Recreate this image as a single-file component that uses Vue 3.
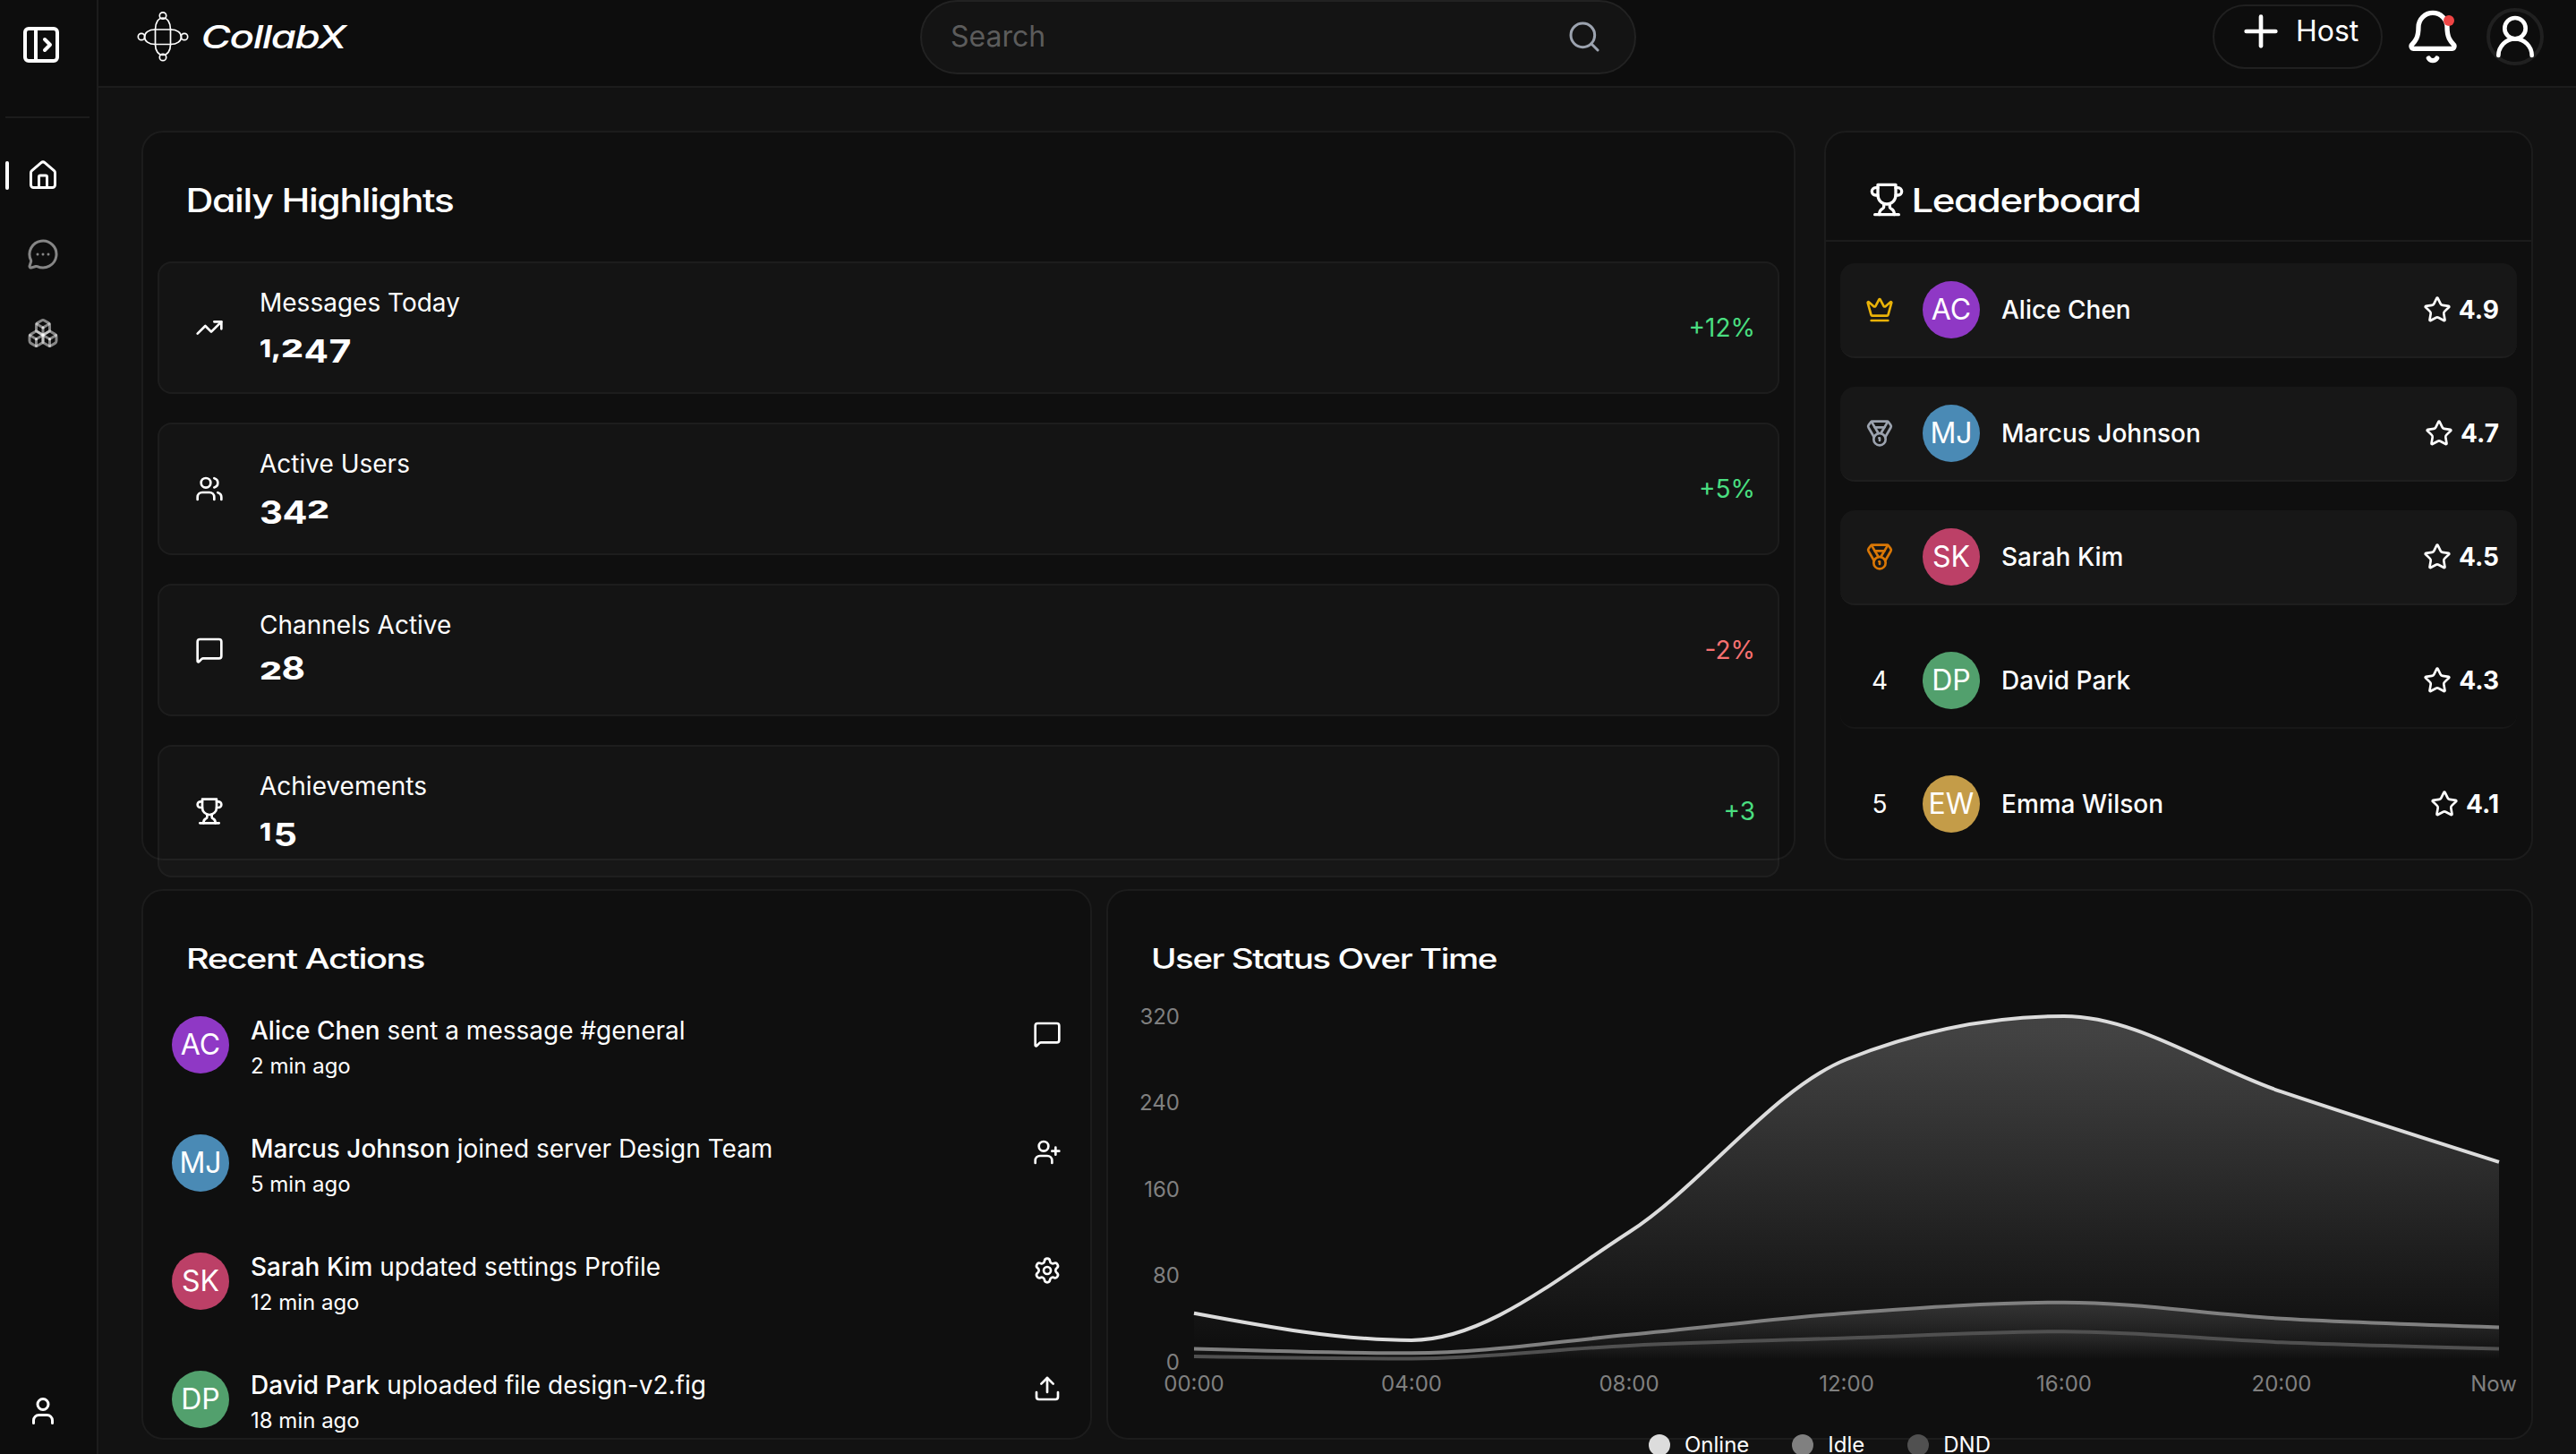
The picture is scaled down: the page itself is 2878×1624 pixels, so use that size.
<script setup>
const icons = {
  panel: '<rect width="18" height="18" x="3" y="3" rx="2"/><path d="M9 3v18"/><path d="m14 9 3 3-3 3"/>',
  home: '<path d="M15 21v-8a1 1 0 0 0-1-1h-4a1 1 0 0 0-1 1v8"/><path d="M3 10a2 2 0 0 1 .709-1.528l7-5.999a2 2 0 0 1 2.582 0l7 5.999A2 2 0 0 1 21 10v9a2 2 0 0 1-2 2H5a2 2 0 0 1-2-2z"/>',
  chat: '<path d="M2.992 16.342a2 2 0 0 1 .094 1.167l-1.065 3.29a1 1 0 0 0 1.236 1.168l3.413-.998a2 2 0 0 1 1.099.092 10 10 0 1 0-4.777-4.719"/><path d="M8 12h.01"/><path d="M12 12h.01"/><path d="M16 12h.01"/>',
  boxes: '<path d="M2.97 12.92A2 2 0 0 0 2 14.63v3.24a2 2 0 0 0 .97 1.71l3 1.8a2 2 0 0 0 2.06 0L12 19v-5.5l-5-3-4.03 2.42Z"/><path d="m7 16.5-4.74-2.85"/><path d="m7 16.5 5-3"/><path d="M7 16.5v5.17"/><path d="M12 13.5V19l3.97 2.38a2 2 0 0 0 2.06 0l3-1.8a2 2 0 0 0 .97-1.71v-3.24a2 2 0 0 0-.97-1.71L17 10.5l-5 3Z"/><path d="m17 16.5-5-3"/><path d="m17 16.5 4.74-2.85"/><path d="M17 16.5v5.17"/><path d="M7.97 4.42A2 2 0 0 0 7 6.13v4.37l5 3 5-3V6.13a2 2 0 0 0-.97-1.71l-3-1.8a2 2 0 0 0-2.06 0l-3 1.8Z"/><path d="M12 8 7.26 5.15"/><path d="m12 8 4.74-2.85"/><path d="M12 13.5V8"/>',
  user: '<path d="M19 21v-2a4 4 0 0 0-4-4H9a4 4 0 0 0-4 4v2"/><circle cx="12" cy="7" r="4"/>',
  search: '<circle cx="11" cy="11" r="8"/><path d="m21 21-4.3-4.3"/>',
  plus: '<path d="M5 12h14"/><path d="M12 5v14"/>',
  bell: '<path d="M10.268 21a2 2 0 0 0 3.464 0"/><path d="M3.262 15.326A1 1 0 0 0 4 17h16a1 1 0 0 0 .74-1.673C19.41 13.956 18 12.499 18 8A6 6 0 0 0 6 8c0 4.499-1.411 5.956-2.738 7.326"/>',
  userRound: '<circle cx="12" cy="8" r="5"/><path d="M20 21a8 8 0 0 0-16 0"/>',
  trend: '<path d="M16 7h6v6"/><path d="m22 7-8.5 8.5-5-5L2 17"/>',
  users: '<path d="M16 21v-2a4 4 0 0 0-4-4H6a4 4 0 0 0-4 4v2"/><path d="M16 3.128a4 4 0 0 1 0 7.744"/><path d="M22 21v-2a4 4 0 0 0-3-3.87"/><circle cx="9" cy="7" r="4"/>',
  message: '<path d="M22 17a2 2 0 0 1-2 2H6.828a2 2 0 0 0-1.414.586l-2.202 2.202A.71.71 0 0 1 2 21.286V5a2 2 0 0 1 2-2h16a2 2 0 0 1 2 2z"/>',
  trophy: '<path d="M6 9H4.5a2.5 2.5 0 0 1 0-5H6"/><path d="M18 9h1.5a2.5 2.5 0 0 0 0-5H18"/><path d="M4 22h16"/><path d="M10 14.66V17c0 .55-.47.98-.97 1.21C7.85 18.75 7 20.24 7 22"/><path d="M14 14.66V17c0 .55.47.98.97 1.21C16.15 18.75 17 20.24 17 22"/><path d="M18 2H6v7a6 6 0 0 0 12 0V2Z"/>',
  crown: '<path d="M11.562 3.266a.5.5 0 0 1 .876 0L15.39 8.87a1 1 0 0 0 1.516.294L21.183 5.5a.5.5 0 0 1 .798.519l-2.834 10.246a1 1 0 0 1-.956.734H5.81a1 1 0 0 1-.957-.734L2.02 6.02a.5.5 0 0 1 .798-.519l4.276 3.664a1 1 0 0 0 1.516-.294z"/><path d="M5 21h14"/>',
  medal: '<path d="M7.21 15 2.66 7.14a2 2 0 0 1 .13-2.2L4.4 2.8A2 2 0 0 1 6 2h12a2 2 0 0 1 1.6.8l1.6 2.14a2 2 0 0 1 .14 2.2L16.79 15"/><path d="M11 12 5.12 2.2"/><path d="m13 12 5.88-9.8"/><path d="M8 7h8"/><circle cx="12" cy="17" r="5"/><path d="M12 18v-2h-.5"/>',
  star: '<path d="M11.525 2.295a.53.53 0 0 1 .95 0l2.31 4.679a2.123 2.123 0 0 0 1.595 1.16l5.166.756a.53.53 0 0 1 .294.904l-3.736 3.638a2.123 2.123 0 0 0-.611 1.878l.882 5.14a.53.53 0 0 1-.771.56l-4.618-2.428a2.122 2.122 0 0 0-1.973 0L6.396 21.01a.53.53 0 0 1-.77-.56l.881-5.139a2.122 2.122 0 0 0-.611-1.879L2.16 9.795a.53.53 0 0 1 .294-.906l5.165-.755a2.122 2.122 0 0 0 1.597-1.16z"/>',
  userPlus: '<path d="M16 21v-2a4 4 0 0 0-4-4H6a4 4 0 0 0-4 4v2"/><circle cx="9" cy="7" r="4"/><path d="M19 8v6"/><path d="M22 11h-6"/>',
  settings: '<path d="M9.671 4.136a2.34 2.34 0 0 1 4.659 0 2.34 2.34 0 0 0 3.319 1.915 2.34 2.34 0 0 1 2.33 4.033 2.34 2.34 0 0 0 0 3.831 2.34 2.34 0 0 1-2.33 4.033 2.34 2.34 0 0 0-3.319 1.915 2.34 2.34 0 0 1-4.659 0 2.34 2.34 0 0 0-3.32-1.915 2.34 2.34 0 0 1-2.33-4.033 2.34 2.34 0 0 0 0-3.831A2.34 2.34 0 0 1 6.35 6.051a2.34 2.34 0 0 0 3.319-1.915"/><circle cx="12" cy="12" r="3"/>',
  upload: '<path d="M12 3v12"/><path d="m17 8-5-5-5 5"/><path d="M21 15v4a2 2 0 0 1-2 2H5a2 2 0 0 1-2-2v-4"/>',
}

// Old-style figures: [character, x, width, kind]
// kind: x = x-height, c = comma, d = descending, a = ascending
const highlights = [
  { icon: 'trend', label: 'Messages Today', glyphs: [['1', 0, 13, 'x'], [',', 13, 11, 'c'], ['2', 24, 25, 'x'], ['4', 49.5, 27.5, 'd'], ['7', 77.5, 25, 'd']], change: '+12%', up: true },
  { icon: 'users', label: 'Active Users', glyphs: [['3', 0, 26, 'd'], ['4', 25.5, 28, 'd'], ['2', 53, 25, 'x']], change: '+5%', up: true },
  { icon: 'message', label: 'Channels Active', glyphs: [['2', 0, 25, 'x'], ['8', 24.5, 26.5, 'a']], change: '-2%', up: false },
  { icon: 'trophy', label: 'Achievements', glyphs: [['1', 0, 13, 'x'], ['5', 15.5, 26.5, 'd']], change: '+3', up: true },
]

const leaders = [
  { icon: 'crown', tone: 'gold', initials: 'AC', color: '#8f38c5', name: 'Alice Chen', score: '4.9' },
  { icon: 'medal', tone: 'silver', initials: 'MJ', color: '#4a8ab5', name: 'Marcus Johnson', score: '4.7' },
  { icon: 'medal', tone: 'bronze', initials: 'SK', color: '#bc4067', name: 'Sarah Kim', score: '4.5' },
  { rank: '4', initials: 'DP', color: '#52a06d', name: 'David Park', score: '4.3' },
  { rank: '5', initials: 'EW', color: '#c49c48', name: 'Emma Wilson', score: '4.1' },
]

const actions = [
  { initials: 'AC', color: '#8f38c5', name: 'Alice Chen', text: 'sent a message #general', time: '2 min ago', icon: 'message' },
  { initials: 'MJ', color: '#4a8ab5', name: 'Marcus Johnson', text: 'joined server Design Team', time: '5 min ago', icon: 'userPlus' },
  { initials: 'SK', color: '#bc4067', name: 'Sarah Kim', text: 'updated settings Profile', time: '12 min ago', icon: 'settings' },
  { initials: 'DP', color: '#52a06d', name: 'David Park', text: 'uploaded file design-v2.fig', time: '18 min ago', icon: 'upload' },
]

// Chart
const X0 = 96
const X1 = 1554
const Y0 = 405
const Y1 = 19
const times = ['00:00', '04:00', '08:00', '12:00', '16:00', '20:00', 'Now']
const ticks = [320, 240, 160, 80, 0]
const sx = (i) => X0 + (i * (X1 - X0)) / 6
const sy = (v) => Y0 - (v * (Y0 - Y1)) / 320

// Monotone cubic interpolation through the data points
function monotone(values) {
  const p = values.map((v, i) => [sx(i), sy(v)])
  const n = p.length
  const h = (X1 - X0) / 6
  const s = p.slice(1).map((q, i) => (q[1] - p[i][1]) / h)
  const t = new Array(n).fill(0)
  for (let i = 1; i < n - 1; i++) {
    const a = s[i - 1]
    const b = s[i]
    t[i] = (Math.sign(a) + Math.sign(b)) * Math.min(Math.abs(a), Math.abs(b), 0.5 * Math.abs((a + b) / 2)) || 0
  }
  t[0] = (3 * s[0] - t[1]) / 2
  t[n - 1] = (3 * s[n - 2] - t[n - 2]) / 2
  let d = `M${p[0][0]},${p[0][1]}`
  for (let i = 0; i < n - 1; i++) {
    d += `C${p[i][0] + h / 3},${p[i][1] + (t[i] * h) / 3},${p[i + 1][0] - h / 3},${p[i + 1][1] - (t[i + 1] * h) / 3},${p[i + 1][0]},${p[i + 1][1]}`
  }
  return d
}

const series = [
  { name: 'Online', color: '#dcdcdc', opacity: 0.25, values: [45, 20, 120, 280, 320, 250, 185] },
  { name: 'Idle', color: '#808080', opacity: 0.27, values: [12, 8, 25, 45, 55, 40, 32] },
  { name: 'DND', color: '#505050', opacity: 0.27, values: [5, 3, 15, 22, 28, 18, 12] },
].map((s) => {
  const line = monotone(s.values)
  return { ...s, line, area: `${line}L${X1},${Y0}L${X0},${Y0}Z` }
})
</script>

<template>
  <div class="app">
    <aside class="sidebar">
      <div class="side-top">
        <svg class="icon i48" viewBox="0 0 24 24" v-html="icons.panel" />
      </div>
      <nav class="side-nav">
        <a class="side-link active"><svg class="icon i36" viewBox="0 0 24 24" v-html="icons.home" /></a>
        <a class="side-link"><svg class="icon i36" viewBox="0 0 24 24" v-html="icons.chat" /></a>
        <a class="side-link"><svg class="icon i36" viewBox="0 0 24 24" v-html="icons.boxes" /></a>
      </nav>
      <div class="side-user"><svg class="icon i36" viewBox="0 0 24 24" v-html="icons.user" /></div>
    </aside>

    <div class="page">
      <header class="header">
        <div class="brand">
          <svg class="logo" width="60" height="60" viewBox="0 0 60 60" fill="none" stroke="#fff" stroke-width="1.7">
            <path d="M21.5 22h17v16.5h-17z" />
            <path d="M21.5 22C21.5 14 25 9 30 9s8.5 5 8.5 13M21.5 38.5C21.5 46 25 50.500 30 50.500s8.5-4.500 8.5-12" />
            <path d="M21.5 22C14 22 9.5 25.500 9.5 30.200S14 38.500 21.5 38.500M38.500 22C46 22 50.500 25.500 50.500 30.200S46 38.500 38.500 38.500" />
            <circle cx="30" cy="6.5" r="3.7" /><circle cx="30" cy="53" r="3.7" />
            <circle cx="6" cy="30" r="3.7" /><circle cx="54" cy="30" r="3.7" />
          </svg>
          <svg class="display" width="180" height="60">
            <text x="12.5" y="43" font-size="36" font-style="italic" textLength="161" lengthAdjust="spacingAndGlyphs">CollabX</text>
          </svg>
        </div>
        <div class="search">
          <span>Search</span>
          <svg class="icon i40" viewBox="0 0 24 24" v-html="icons.search" />
        </div>
        <div class="tools">
          <button class="host"><svg class="icon i56" viewBox="0 0 24 24" v-html="icons.plus" /><span>Host</span></button>
          <div class="bell"><svg class="icon i64" viewBox="0 0 24 24" v-html="icons.bell" /><i class="dot" /></div>
          <div class="me"><svg class="icon i56" viewBox="0 0 24 24" v-html="icons.userRound" /></div>
        </div>
      </header>

      <main class="main">
        <section class="row top">
          <article class="card daily">
            <svg class="display title" width="400" height="60">
              <text x="-0.5" y="43" font-size="36.5" textLength="299" lengthAdjust="spacingAndGlyphs">Daily Highlights</text>
            </svg>
            <div v-for="h in highlights" :key="h.label" class="stat">
              <div class="stat-icon"><svg class="icon i32" viewBox="0 0 24 24" v-html="icons[h.icon]" /></div>
              <div class="stat-body">
                <div class="stat-label">{{ h.label }}</div>
                <svg class="display value" width="160" height="50">
                  <text><tspan v-for="g in h.glyphs" :key="g[1]" :x="g[1]" :y="g[3] === 'd' ? 37 : 31" :textLength="g[2]" lengthAdjust="spacingAndGlyphs" :class="'fig-' + g[3]">{{ g[0] }}</tspan></text>
                </svg>
              </div>
              <div class="change" :class="h.up ? 'up' : 'down'">{{ h.change }}</div>
            </div>
          </article>

          <article class="card board">
            <div class="board-head">
              <svg class="icon i40" viewBox="0 0 24 24" v-html="icons.trophy" />
              <svg class="display" width="300" height="60">
                <text x="7.5" y="43.5" font-size="36.5" textLength="256" lengthAdjust="spacingAndGlyphs">Leaderboard</text>
              </svg>
            </div>
            <div class="board-list">
              <div v-for="l in leaders" :key="l.name" class="leader" :class="{ podium: l.icon }">
                <div class="rank" :class="l.tone">
                  <svg v-if="l.icon" class="icon i32" viewBox="0 0 24 24" v-html="icons[l.icon]" />
                  <template v-else>{{ l.rank }}</template>
                </div>
                <div class="avatar" :style="{ background: l.color }">{{ l.initials }}</div>
                <div class="leader-name">{{ l.name }}</div>
                <svg class="icon i32" viewBox="0 0 24 24" v-html="icons.star" />
                <div class="score">{{ l.score }}</div>
              </div>
            </div>
          </article>
        </section>

        <section class="row bottom">
          <article class="card recent">
            <svg class="display title" width="400" height="50">
              <text x="0" y="35.5" font-size="31.5" textLength="266" lengthAdjust="spacingAndGlyphs">Recent Actions</text>
            </svg>
            <div v-for="a in actions" :key="a.name" class="action">
              <div class="avatar" :style="{ background: a.color }">{{ a.initials }}</div>
              <div class="action-body">
                <div class="action-text"><b>{{ a.name }}</b> {{ a.text }}</div>
                <div class="action-time">{{ a.time }}</div>
              </div>
              <svg class="icon i32" viewBox="0 0 24 24" v-html="icons[a.icon]" />
            </div>
          </article>

          <article class="card status">
            <svg class="display title" width="500" height="50">
              <text x="0" y="35.5" font-size="31.5" textLength="386" lengthAdjust="spacingAndGlyphs">User Status Over Time</text>
            </svg>
            <svg class="chart" width="1590" height="450">
              <defs>
                <linearGradient v-for="s in series" :id="'fill-' + s.name" :key="s.name" x1="0" y1="0" x2="0" y2="1">
                  <stop offset="5%" :stop-color="s.color" :stop-opacity="s.opacity" />
                  <stop offset="95%" :stop-color="s.color" stop-opacity="0" />
                </linearGradient>
              </defs>
              <g v-for="s in series" :key="s.name">
                <path :d="s.area" :fill="`url(#fill-${s.name})`" />
                <path :d="s.line" fill="none" :stroke="s.color" stroke-width="4" />
              </g>
              <g class="axis">
                <text v-for="t in ticks" :key="t" :x="X0 - 16" :y="sy(t) + 8.7" text-anchor="end">{{ t }}</text>
                <text v-for="(t, i) in times" :key="t" :x="i === 6 ? X1 - 6 : sx(i)" y="438" text-anchor="middle">{{ t }}</text>
              </g>
            </svg>
            <div class="legend">
              <div v-for="s in series" :key="s.name" class="legend-item"><i :style="{ background: s.color }" /><span>{{ s.name }}</span></div>
            </div>
          </article>
        </section>
      </main>
    </div>
  </div>
</template>

<style>
body {
  margin: 0;
  background: #121212;
}
</style>

<style scoped>
.app {
  display: flex;
  width: 2878px;
  height: 1624px;
  overflow: hidden;
  background: #121212;
  color: #fff;
  font-family: Inter, "Liberation Sans", sans-serif;
  font-size: 28px;
  line-height: 40px;
}
.app *, .app { box-sizing: border-box; }

.icon {
  flex: none;
  display: block;
  fill: none;
  stroke: currentColor;
  stroke-width: 2;
  stroke-linecap: round;
  stroke-linejoin: round;
}
.i32 { width: 32px; height: 32px; }
.i36 { width: 36px; height: 36px; }
.i40 { width: 40px; height: 40px; }
.i48 { width: 48px; height: 48px; }
.i56 { width: 56px; height: 56px; }
.i64 { width: 64px; height: 64px; }

.display {
  display: block;
  flex: none;
  overflow: visible;
  fill: #fff;
  font-weight: 500;
  letter-spacing: -1.2px;
  font-feature-settings: "cv11" 1;
}

/* Sidebar */
.sidebar {
  flex: none;
  width: 110px;
  display: flex;
  flex-direction: column;
  background: #0d0d0d;
  border-right: 2px solid #1c1c1c;
}
.side-top {
  height: 132px;
  margin: 0 8px 0 6px;
  padding: 26px 0 0 16px;
  border-bottom: 2px solid #1c1c1c;
}
.side-nav {
  flex: 1;
  display: flex;
  flex-direction: column;
  gap: 52px;
  padding-top: 46px;
}
.side-link {
  display: flex;
  align-items: center;
  height: 36px;
  padding-left: 30px;
  color: rgba(255, 255, 255, 0.5);
}
.side-link.active {
  padding-left: 6px;
  gap: 20px;
  color: #fff;
}
.side-link.active::before {
  content: "";
  width: 4px;
  height: 32px;
  border-radius: 2px;
  background: #fff;
}
.side-user { padding: 0 0 30px 30px; }

/* Header */
.page {
  flex: none;
  width: 2768px;
  display: flex;
  flex-direction: column;
}
.header {
  flex: none;
  display: flex;
  align-items: center;
  height: 98px;
  padding: 0 36px 14px 42px;
  background: #0d0d0d;
  border-bottom: 2px solid #1c1c1c;
}
.brand {
  display: flex;
  align-items: center;
  width: 876px;
}
.search {
  display: flex;
  align-items: center;
  justify-content: space-between;
  width: 800px;
  height: 83px;
  padding: 0 36px 0 32px;
  border: 2px solid #222;
  border-radius: 42px;
  background: #141414;
  color: #5c5c5c;
  font-size: 32px;
}
.search .icon { color: #9ca3af; stroke-width: 1.8; }
.tools {
  display: flex;
  align-items: center;
  margin-left: auto;
}
.host {
  display: flex;
  align-items: center;
  width: 190px;
  height: 72px;
  padding: 0 0 12px 24px;
  gap: 11px;
  border: 2px solid #202020;
  border-radius: 36px;
  background: none;
  color: #fff;
  font: 400 32px/40px Inter, sans-serif;
}
.bell {
  position: relative;
  margin: 0 28px 0 24px;
}
.dot {
  position: absolute;
  left: 44px;
  top: 8px;
  width: 12px;
  height: 12px;
  border-radius: 50%;
  background: #ef4444;
}
.me {
  display: flex;
  width: 64px;
  height: 64px;
  border: 4px solid #202020;
  border-radius: 50%;
}

/* Cards */
.main {
  display: flex;
  flex-direction: column;
  gap: 32px;
  padding: 48px;
}
.row { display: flex; }
.top { gap: 32px; height: 815px; }
.bottom { gap: 16px; height: 615px; }
.card {
  flex: none;
  background: #0f0f0f;
  border: 2px solid #1c1c1c;
  border-radius: 24px;
}
.daily { width: 1848px; padding: 46px 16px 0; }
.daily .title { margin: 0 0 38px 32px; }
.stat {
  display: flex;
  align-items: center;
  height: 148px;
  margin-bottom: 32px;
  padding: 0 25px 0 40px;
  background: rgba(255, 255, 255, 0.025);
  border: 2px solid rgba(255, 255, 255, 0.04);
  border-radius: 16px;
}
.stat-body { flex: 1; padding: 4px 0 0 40px; }
.value { margin-top: 10px; letter-spacing: 0; }
.value .fig-x { font-size: 27.5px; font-weight: 800; }
.value .fig-c { font-size: 30px; font-weight: 800; }
.value .fig-d, .value .fig-a { font-size: 36px; font-weight: 700; }
.up { color: #4ade80; }
.down { color: #f87171; }

.board { width: 792px; }
.board-head {
  display: flex;
  align-items: center;
  height: 122px;
  padding: 30px 0 0 48px;
  border-bottom: 2px solid #1c1c1c;
}
.board-list {
  display: flex;
  flex-direction: column;
  gap: 32px;
  padding: 24px 16px 0;
}
.leader {
  flex: none;
  display: flex;
  align-items: center;
  height: 106px;
  padding: 0 20px;
  border-bottom: 2px solid #171717;
  border-radius: 16px;
}
.leader.podium { background: #171717; border-color: #1e1e1e; }
.leader:last-child { border-color: transparent; }
.rank {
  display: flex;
  justify-content: center;
  width: 48px;
  margin-right: 24px;
}
.gold { color: #eab308; }
.silver { color: #9ca3af; }
.bronze { color: #d97706; }
.avatar {
  flex: none;
  display: flex;
  align-items: center;
  justify-content: center;
  width: 64px;
  height: 64px;
  border-radius: 50%;
  font-size: 32px;
}
.leader-name {
  flex: 1;
  padding-left: 24px;
  font-weight: 500;
}
.score { padding-left: 8px; font-weight: 700; }

.recent { width: 1062px; padding: 51px 32px 0; }
.recent .title { margin: 0 0 39px 16px; }
.action {
  display: flex;
  align-items: flex-start;
  height: 132px;
}
.action > .icon { margin-top: 4px; }
.action-body { flex: 1; padding-left: 24px; }
.action-text { margin-top: -1px; line-height: 34px; }
.action b { font-weight: 500; }
.action-time { margin-top: 1px; font-size: 24px; line-height: 44px; }

.status { width: 1594px; padding-top: 51px; }
.status .title { margin-left: 48px; }
.chart {
  display: block;
  margin-top: 20px;
  overflow: visible;
}
.axis { fill: #808080; font-size: 24px; }
.legend {
  display: flex;
  justify-content: center;
  gap: 48px;
  margin-top: 28px;
  font-size: 24px;
}
.legend-item { display: flex; align-items: center; gap: 16px; }
.legend-item i { width: 24px; height: 24px; border-radius: 50%; }
</style>
